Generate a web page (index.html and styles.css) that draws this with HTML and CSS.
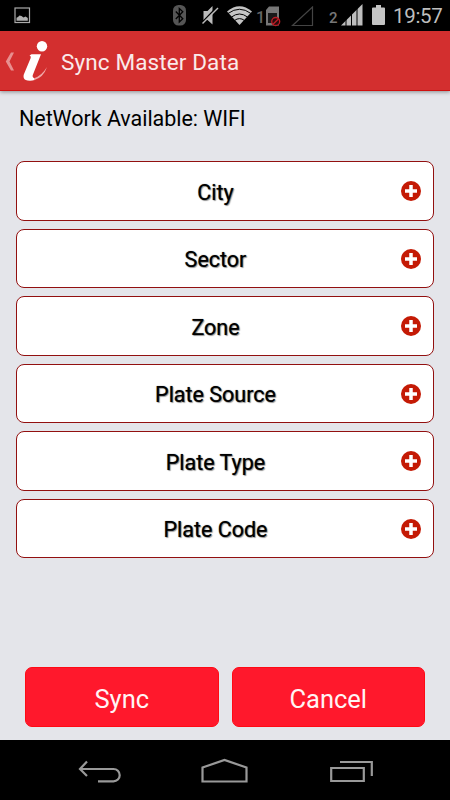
FILE: index.html
```html
<!DOCTYPE html>
<html lang="en">
<head>
<meta charset="utf-8">
<title>Sync Master Data</title>
<link rel="stylesheet" href="styles.css">
</head>
<body>
<div class="screen">
  <div class="status">
    <svg class="s-pic" width="18" height="18" viewBox="0 0 18 18"><rect x="1" y="1" width="14.5" height="14.5" fill="none" stroke="#aaa" stroke-width="1.2"/><path d="M2.500 13.800v-3l1.500-.8 1.500-1.500 2 .5 2 1.500 2-1 2.300 1.500v2.800z" fill="#b0b0b0"/></svg>
    <svg class="s-bt" width="13" height="21" viewBox="0 0 13 21"><rect width="13" height="20.5" rx="5.5" fill="#555"/><path d="M2.800 6.500l7 7.200-3.500 3.300V3.500l3.500 3.300-7 7.200" fill="none" stroke="#000" stroke-width="1.300"/></svg>
    <svg class="s-mute" width="17" height="21" viewBox="0 0 17 21"><path d="M1.500 6h4l5-5v18.500l-5-4.500h-4z" fill="#bbb"/><path d="M1 16.500L15 2" stroke="#000" stroke-width="1.600"/><path d="M.5 18.500L16 3" stroke="#bbb" stroke-width="1.400"/></svg>
    <svg class="s-wifi" width="25" height="19" viewBox="0 0 25 19"><path d="M0 5.500Q12.500-5 25 5.500L12.500 19z" fill="#c4c4c4"/><path d="M1 7.500q11.500-8.500 23 0M4.500 11q8-6 16 0M7.500 14.500q5-3.800 10 0" fill="none" stroke="#000" stroke-width="1"/></svg>
    <span class="sim-no one">1</span>
    <svg class="s-sim" width="16" height="21" viewBox="0 0 16 21"><path d="M1 19.500V4l3-3.500h10V19.500z" fill="#777"/><path d="M3 17V7h9v10z" fill="#191919"/><circle cx="10.700" cy="15.500" r="4" fill="#280b0c" stroke="#bd1c25" stroke-width="1.300"/><path d="M8 18.300l5.600-5.600" stroke="#bd1c25" stroke-width="1.300"/></svg>
    <svg class="s-empty" width="23" height="21" viewBox="0 0 23 21"><path d="M1.500 19.500H21.500V1z" fill="none" stroke="#444" stroke-width="1.200"/></svg>
    <span class="sim-no two">2</span>
    <svg class="s-signal" width="23" height="22" viewBox="0 0 23 22"><path d="M0 21.500L21.500 0v21.500z" fill="#bdbdbd"/><path d="M5 10v12M10.500 5v17M16 1v21" stroke="#000" stroke-width="1"/></svg>
    <svg class="s-bat" width="14" height="21" viewBox="0 0 14 21"><path d="M0 3.500q0-1 1-1h3V0h5v2.500h3q1 0 1 1v15.500q0 1-1 1H1q-1 0-1-1z" fill="#c4c4c4"/></svg>
    <span class="time">19:57</span>
  </div>
  <header class="bar">
    <svg class="back" width="10" height="20" viewBox="0 0 10 20"><path d="M9 .5H6L.8 9.500L6 18.500H9L4.500 9.500z" fill="#e88f8f"/></svg>
    <svg class="logo" width="26" height="42" viewBox="0 0 26 42"><circle cx="19" cy="6.300" r="5.200" fill="#fff"/><path d="M8.500 14.300H18L9.800 35Q9 38 11.500 38.200L11.500 40Q8.500 41 4.500 40.500Q-.5 39.500 .8 34.500L7.500 18.500Q8.300 15.800 6.500 15.600z" fill="#fff"/><path d="M11 38.200Q18.500 36 24 27Q20.500 37.500 11 40.200z" fill="#f0a8a8"/></svg>
    <h1>Sync Master Data</h1>
  </header>
  <main>
    <p class="network">NetWork Available: WIFI</p>
    <div class="list">
      <div class="row"><span>City</span><svg class="plus" viewBox="0 0 20 20"><circle cx="10" cy="10" r="10"/><path d="M10 4v12M4 10h12"/></svg></div>
      <div class="row"><span>Sector</span><svg class="plus" viewBox="0 0 20 20"><circle cx="10" cy="10" r="10"/><path d="M10 4v12M4 10h12"/></svg></div>
      <div class="row"><span>Zone</span><svg class="plus" viewBox="0 0 20 20"><circle cx="10" cy="10" r="10"/><path d="M10 4v12M4 10h12"/></svg></div>
      <div class="row"><span>Plate Source</span><svg class="plus" viewBox="0 0 20 20"><circle cx="10" cy="10" r="10"/><path d="M10 4v12M4 10h12"/></svg></div>
      <div class="row"><span>Plate Type</span><svg class="plus" viewBox="0 0 20 20"><circle cx="10" cy="10" r="10"/><path d="M10 4v12M4 10h12"/></svg></div>
      <div class="row"><span>Plate Code</span><svg class="plus" viewBox="0 0 20 20"><circle cx="10" cy="10" r="10"/><path d="M10 4v12M4 10h12"/></svg></div>
    </div>
    <div class="actions"><button>Sync</button><button>Cancel</button></div>
  </main>
  <nav class="nav">
    <svg class="n-back" width="43" height="24" viewBox="0 0 43 24"><path d="M9 1.500L2 9l7 7M2 9H35.500a6.200 6.200 0 0 1 0 12.400H20" fill="none" stroke="#999" stroke-width="2.200"/></svg>
    <svg class="n-home" width="47" height="26" viewBox="0 0 47 26"><path d="M1.500 23.500V9.500L23.500 2l22 7.500V23.500z" fill="none" stroke="#999" stroke-width="2.200"/></svg>
    <svg class="n-recent" width="44" height="23" viewBox="0 0 44 23"><path d="M1.200 8h32.600v13H1.200zM10 2h31.800v14" fill="none" stroke="#999" stroke-width="2.200"/></svg>
  </nav>
</div>
</body>
</html>
```
FILE: styles.css
```css
* { box-sizing: border-box; }
body { margin: 0; font-family: Roboto, sans-serif; }
svg { display: block; flex: none; }
.screen { width: 450px; height: 800px; display: flex; flex-direction: column; background: #e4e5ea; overflow: hidden; }
.status { height: 31px; flex: none; background: #000; display: flex; align-items: flex-start; }
.s-pic { margin: 7px 0 0 14px; }
.s-bt { margin: 5px 0 0 141px; }
.s-mute { margin: 5px 0 0 16px; }
.s-wifi { margin: 6px 0 0 8px; }
.sim-no { color: #666; font-weight: 500; line-height: 18px; margin-top: 9px; }
.one { font-size: 16px; width: 9px; margin-left: 4px; }
.two { font-size: 15px; width: 10px; margin-left: 15px; color: #777; }
.s-sim { margin: 6px 0 0 0; }
.s-empty { margin: 6px 0 0 10px; }
.s-signal { margin: 4px 0 0 2px; }
.s-bat { margin: 5px 0 0 8px; }
.time { color: #bebebe; font-size: 20.5px; letter-spacing: -.3px; line-height: 24px; margin: 4px 0 0 7px; white-space: nowrap; }
.bar { height: 60px; flex: none; background: #d32f2f; border-bottom: 1px solid #cf1010; box-shadow: 0 1px 4px rgba(0,0,0,.4); display: flex; align-items: flex-start; position: relative; }
.back { margin: 21px 0 0 5px; }
.logo { margin: 9px 0 0 8px; }
h1 { margin: 16px 0 0 12px; font-size: 22.5px; letter-spacing: .12px; line-height: 30px; font-weight: 400; color: #faeaea; white-space: nowrap; }
main { flex: 1; display: flex; flex-direction: column; }
.network { margin: 14px 0 0 19px; font-size: 21.5px; letter-spacing: -.05px; line-height: 28px; color: #000; white-space: nowrap; }
.list { margin: 28.4px 16px 0; display: flex; flex-direction: column; gap: 8px; }
.row { height: 59.5px; border: 1px solid #921010; border-radius: 8px; background: #fff; display: grid; grid-template-columns: 1fr 20px; align-items: center; padding: 0 12px 0 0; }
.row span { font-size: 21.6px; letter-spacing: -.05px; line-height: 28px; color: #000; text-align: center; margin: 3px -13px 0 0; text-shadow: 1px 1px 1px rgba(0,0,0,.4), 0 0 1px rgba(0,0,0,.6); }
.plus { width: 20px; height: 20px; }
.plus circle { fill: #c41a05; }
.plus path { stroke: #fff; stroke-width: 3.5; fill: none; }
.actions { display: grid; grid-template-columns: 1fr 1fr; gap: 13px; margin: auto 25px 13px; }
button { height: 60px; border: 1px solid #ff0a14; border-radius: 7px; background: #ff182c; color: #fff4f4; font: 400 25.5px Roboto, sans-serif; padding: 3px 0 0; }
.nav { height: 60px; flex: none; background: #000; display: flex; align-items: flex-start; }
.n-back { margin: 20px 0 0 78px; }
.n-home { margin: 18px 0 0 80px; }
.n-recent { margin: 20px 0 0 82px; }
```
